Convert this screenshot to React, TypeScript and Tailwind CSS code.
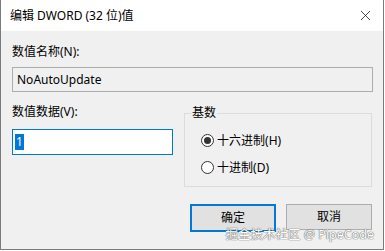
import { X } from 'lucide-react'

const FONT = "font-['Noto_Sans','Noto_Sans_CJK_SC',sans-serif]"

function Radio({ checked, label, className }: { checked?: boolean; label: string; className?: string }) {
  return (
    <div className={`flex items-center gap-[3px] ${className ?? ''}`}>
      <div className="w-[13px] h-[13px] rounded-full border border-[#333] bg-white flex items-center justify-center">
        {checked && <div className="w-[7px] h-[7px] rounded-full bg-[#333]" />}
      </div>
      <span>{label}</span>
    </div>
  )
}

export default function App() {
  return (
    <div className={`w-[385px] h-[251px] bg-white ${FONT} text-[12px] text-black leading-none`}>
      <div className="w-[384px] h-[250px] border border-[#7a7a7a] border-t-0 flex flex-col bg-[#f0f0f0]">
        {/* Title bar */}
        <div className="h-[31px] bg-white flex items-center justify-between pl-[9px] pr-[9px]">
          <span className="text-[12px]">编辑 DWORD (32 位)值</span>
          <X size={17} strokeWidth={1} className="text-black" />
        </div>

        <div className="px-[11px] pt-[15px] relative flex-1">
          <div>数值名称(N):</div>
          <div className="mt-[9px] h-[25px] w-[361px] border border-[#adadad] bg-[#f0f0f0] flex items-center pl-[4px]">
            NoAutoUpdate
          </div>

          <div className="flex items-start mt-[11px]">
            <div className="w-[173px] pt-[3px]">
              <div>数值数据(V):</div>
              <div className="mt-[11px] h-[26px] w-[161px] border border-[#0078d7] bg-white flex items-center pl-[2px]">
                <span className="bg-[#0078d7] text-white px-[1px] h-[16px] flex items-center">1</span>
              </div>
            </div>

            <div className="relative mt-[10px] w-[189px] h-[74px] border border-[#dcdcdc]">
              <span className="absolute -top-[7px] left-[6px] bg-[#f0f0f0] px-[1px]">基数</span>
              <Radio checked label="十六进制(H)" className="mt-[20px] ml-[16px]" />
              <Radio label="十进制(D)" className="mt-[14px] ml-[16px]" />
            </div>
          </div>

          <div className="flex items-start justify-end gap-[10px] mt-[17px]">
            <button className="w-[86px] h-[28px] border-2 border-[#0078d7] bg-[#e1e1e1]">确定</button>
            <button className="w-[86px] h-[26px] border border-[#adadad] bg-[#e1e1e1]">取消</button>
          </div>

          <span className="absolute right-[9px] bottom-[8px] text-[12.5px] text-white [text-shadow:0_0_1px_#555,0_0_1px_#555]">
            掘金技术社区 @ PipeCode
          </span>
        </div>
      </div>
    </div>
  )
}
